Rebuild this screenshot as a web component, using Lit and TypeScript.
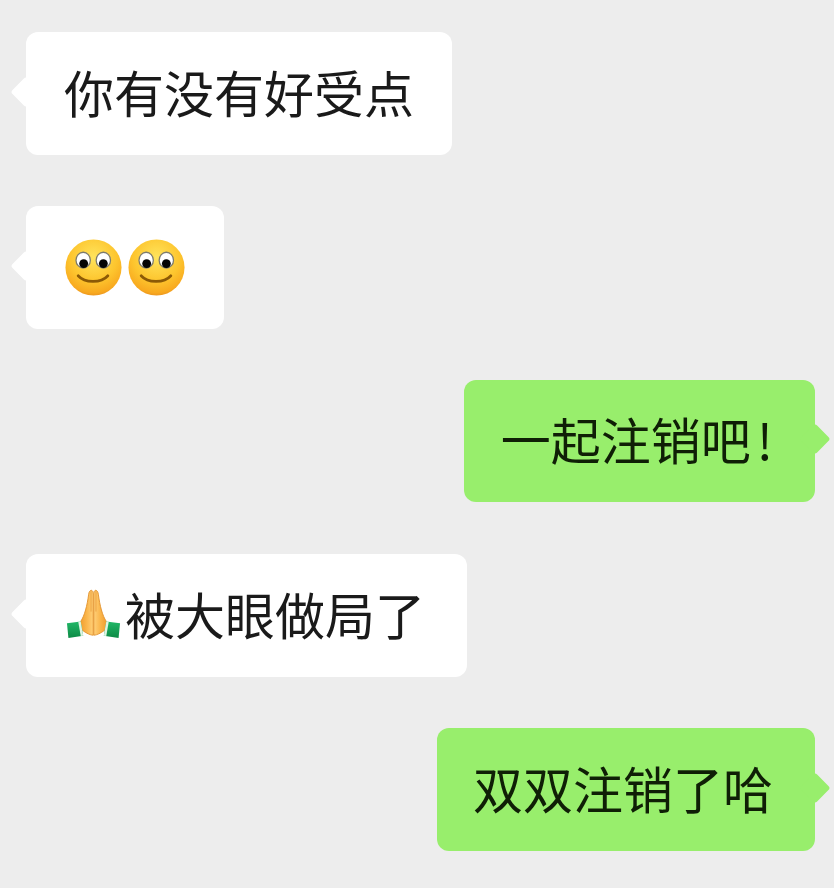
import { LitElement, html, css } from 'lit';
import { customElement } from 'lit/decorators.js';

const smiley = html`<svg class="emoji" viewBox="0 0 60 60">
  <defs>
    <radialGradient id="face" cx="50%" cy="32%" r="70%">
      <stop offset="0" stop-color="#ffe45c" />
      <stop offset="0.6" stop-color="#fdc52e" />
      <stop offset="0.9" stop-color="#f8a91f" />
      <stop offset="1" stop-color="#e8911f" />
    </radialGradient>
  </defs>
  <circle cx="30" cy="30" r="28.5" fill="url(#face)" />
  <ellipse cx="19.5" cy="22.5" rx="7.3" ry="8" fill="#fff" stroke="#7d7b6c" stroke-width="1.3" />
  <ellipse cx="40" cy="22.5" rx="7.3" ry="8" fill="#fff" stroke="#7d7b6c" stroke-width="1.3" />
  <circle cx="20" cy="26" r="4.5" fill="#050505" />
  <circle cx="40" cy="26" r="4.5" fill="#050505" />
  <path d="M14.5 38.5 C21 46 38 46 44.5 38.5" fill="none" stroke="#8c5a06" stroke-width="3" stroke-linecap="round" />
</svg>`;

const pray = html`<svg class="emoji" viewBox="0 0 60 60">
  <defs>
    <linearGradient id="hand" x1="0" y1="0" x2="1" y2="0">
      <stop offset="0" stop-color="#ef9c2c" />
      <stop offset="0.5" stop-color="#fab54a" />
      <stop offset="1" stop-color="#ffd07a" />
    </linearGradient>
    <linearGradient id="hand-r" x1="1" y1="0" x2="0" y2="0">
      <stop offset="0" stop-color="#ef9c2c" />
      <stop offset="0.5" stop-color="#fab54a" />
      <stop offset="1" stop-color="#ffd07a" />
    </linearGradient>
    <linearGradient id="cuff" x1="0" y1="0" x2="0" y2="1">
      <stop offset="0" stop-color="#22b868" />
      <stop offset="1" stop-color="#0c8a45" />
    </linearGradient>
  </defs>
  <path
    d="M29.7 50 C26 50 21 47 16 43 L17 36 C21 30 23.5 20 25 9 C25.5 3 29.7 3 29.7 8 Z"
    fill="url(#hand)"
    stroke="#e2912c"
    stroke-width="0.9"
  />
  <path
    d="M30.3 50 C34 50 39 47 44 43 L43 36 C39 30 36.5 20 35 9 C34.5 3 30.3 3 30.3 8 Z"
    fill="url(#hand-r)"
    stroke="#e2912c"
    stroke-width="0.9"
  />
  <path d="M27.5 5 L27.5 26 M32.5 5 L32.5 26" stroke="#e89c3a" stroke-width="0.8" fill="none" />
  <path d="M3 38 L17 36 L19.5 50.5 L4.5 53 Z" fill="url(#cuff)" />
  <path d="M14.5 36.4 L17 36 L19.5 50.5 L17 50.9 Z" fill="#dff5e3" />
  <path d="M57 38 L43 36 L40.5 50.5 L55.5 53 Z" fill="url(#cuff)" />
  <path d="M45.5 36.4 L43 36 L40.5 50.5 L43 50.9 Z" fill="#dff5e3" />
</svg>`;

@customElement('app-root')
export class AppRoot extends LitElement {
  static styles = css`
    :host {
      display: block;
      height: 888px;
      overflow: hidden;
      background: #ededed;
    }
    .chat {
      display: flex;
      flex-direction: column;
      gap: 51px;
      padding: 32px 19px 0 26px;
    }
    .row {
      display: flex;
      justify-content: flex-start;
    }
    .row.me {
      justify-content: flex-end;
    }
    .bubble {
      position: relative;
      display: flex;
      align-items: center;
      height: 123px;
      box-sizing: border-box;
      padding: 0 38px 6px;
      border-radius: 12px;
      background: #fff;
      color: #1a1a1a;
      font-family: 'Noto Sans CJK SC', sans-serif;
      font-size: 50px;
      white-space: nowrap;
    }
    .bubble.icons {
      padding: 0 34px 0 38px;
    }
    .bubble.prayer {
      padding: 0 42px 6px 38px;
    }
    .me .bubble {
      padding: 0 42px 6px 36px;
      background: #98ee6c;
      color: #0f1f06;
    }
    .me .bubble.short {
      height: 122px;
      margin-bottom: 1px;
      padding-left: 37px;
    }
    .bubble::before {
      content: '';
      position: absolute;
      top: 50%;
      left: -11px;
      width: 22px;
      height: 22px;
      margin-top: -13px;
      border-radius: 3px;
      background: inherit;
      transform: rotate(45deg);
    }
    .me .bubble::before {
      left: auto;
      right: -11px;
    }
    .bang {
      margin-left: 6px;
    }
    .emoji {
      display: block;
      flex: none;
      width: 59px;
      height: 59px;
      margin-right: 4px;
    }
    .prayer .emoji {
      margin-right: 2px;
      margin-bottom: -6px;
    }
  `;

  render() {
    return html`<div class="chat">
      <div class="row"><div class="bubble">你有没有好受点</div></div>
      <div class="row"><div class="bubble icons">${smiley}${smiley}</div></div>
      <div class="row me"><div class="bubble short">一起注销吧<span class="bang">!</span></div></div>
      <div class="row"><div class="bubble prayer">${pray}被大眼做局了</div></div>
      <div class="row me"><div class="bubble">双双注销了哈</div></div>
    </div>`;
  }
}
